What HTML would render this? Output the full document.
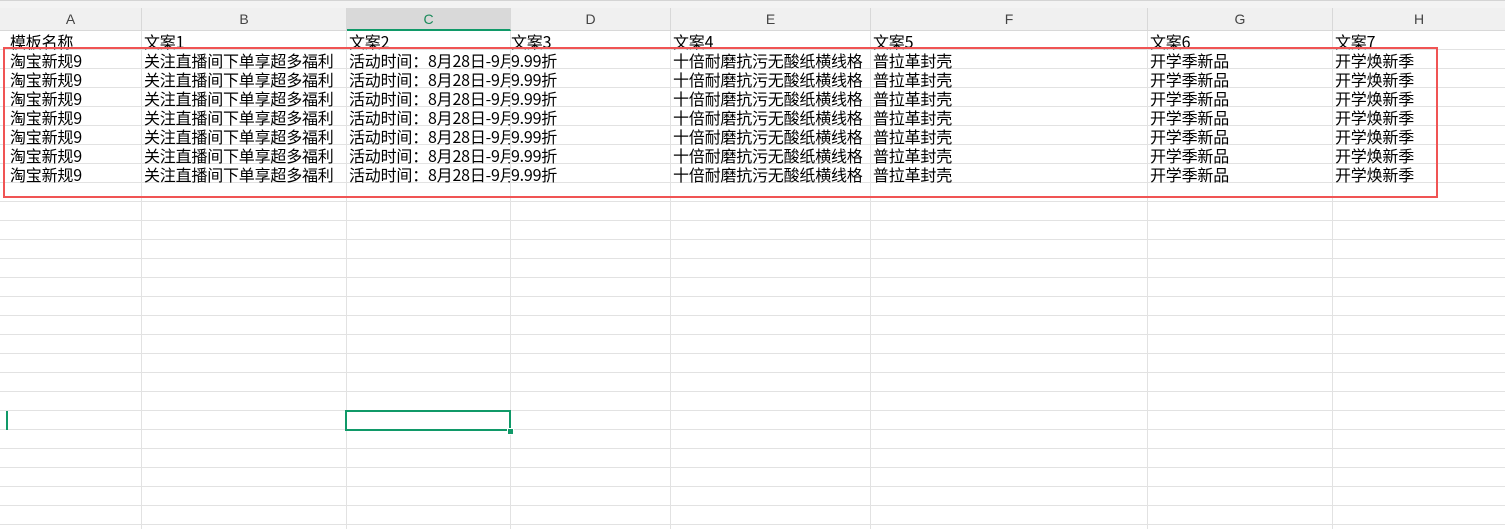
<!DOCTYPE html>
<html><head><meta charset="utf-8"><style>
body{margin:0;width:1505px;height:529px;overflow:hidden;background:#fff;position:relative;font-family:"Liberation Sans","Noto Sans CJK SC",sans-serif;}
.top{position:absolute;left:0;top:0;width:1505px;height:8px;background:#f3f3f3;border-top:1px solid #d4d4d4;box-sizing:border-box}
.hdr{position:absolute;left:0;top:8px;width:1505px;height:23px;background:#f0f0f0;border-bottom:1px solid #d8d8d8;box-sizing:border-box}
.h{position:absolute;top:8px;height:23px;line-height:23px;text-align:center;font-size:14px;color:#444;border-right:1px solid #d8d8d8;box-sizing:border-box}
.grid{position:absolute;left:0;top:31px;width:1505px;height:498px;background:repeating-linear-gradient(to bottom,transparent 0,transparent 18px,#e2e2e2 18px,#e2e2e2 19px)}
.v{position:absolute;top:31px;height:498px;width:1px;background:#e2e2e2}
.r{position:absolute;left:0;height:19px;width:1505px}
.c{position:absolute;top:1px;height:18px;line-height:18px;font-size:16px;color:#000;white-space:nowrap;overflow:hidden;font-family:"WenQuanYi Zen Hei","Noto Sans CJK SC",sans-serif;padding-left:3px;box-sizing:border-box;letter-spacing:-0.2px}
</style></head><body>
<div class="top"></div>
<div class="hdr"></div>
<div class="h" style="left:0;width:142px">A</div>
<div class="h" style="left:142px;width:205px">B</div>
<div class="h" style="left:347px;width:164px;background:#d9d9d9;color:#1a8a5a;border-bottom:2px solid #109968">C</div>
<div class="h" style="left:511px;width:160px">D</div>
<div class="h" style="left:671px;width:200px">E</div>
<div class="h" style="left:871px;width:277px">F</div>
<div class="h" style="left:1148px;width:185px">G</div>
<div class="h" style="left:1333px;width:172px;border-right:none">H</div>
<div class="grid"></div>
<div class="v" style="left:141px"></div><div class="v" style="left:346px"></div><div class="v" style="left:510px"></div><div class="v" style="left:670px"></div><div class="v" style="left:870px"></div><div class="v" style="left:1147px"></div><div class="v" style="left:1332px"></div>

<div class="r" style="top:31px"><div class="c" style="left:7px;width:134px">模板名称</div><div class="c" style="left:141px;width:205px">文案1</div><div class="c" style="left:346px;width:164px">文案2</div><div class="c" style="left:508px;width:162px">文案3</div><div class="c" style="left:670px;width:200px">文案4</div><div class="c" style="left:870px;width:277px">文案5</div><div class="c" style="left:1147px;width:185px">文案6</div><div class="c" style="left:1332px;width:173px">文案7</div></div>
<div class="r" style="top:50px"><div class="c" style="left:7px;width:134px">淘宝新规9</div><div class="c" style="left:141px;width:205px">关注直播间下单享超多福利</div><div class="c" style="left:346px;width:164px">活动时间：8月28日-9月</div><div class="c" style="left:508px;width:162px">9.99折</div><div class="c" style="left:670px;width:200px">十倍耐磨抗污无酸纸横线格</div><div class="c" style="left:870px;width:277px">普拉革封壳</div><div class="c" style="left:1147px;width:185px">开学季新品</div><div class="c" style="left:1332px;width:173px">开学焕新季</div></div>
<div class="r" style="top:69px"><div class="c" style="left:7px;width:134px">淘宝新规9</div><div class="c" style="left:141px;width:205px">关注直播间下单享超多福利</div><div class="c" style="left:346px;width:164px">活动时间：8月28日-9月</div><div class="c" style="left:508px;width:162px">9.99折</div><div class="c" style="left:670px;width:200px">十倍耐磨抗污无酸纸横线格</div><div class="c" style="left:870px;width:277px">普拉革封壳</div><div class="c" style="left:1147px;width:185px">开学季新品</div><div class="c" style="left:1332px;width:173px">开学焕新季</div></div>
<div class="r" style="top:88px"><div class="c" style="left:7px;width:134px">淘宝新规9</div><div class="c" style="left:141px;width:205px">关注直播间下单享超多福利</div><div class="c" style="left:346px;width:164px">活动时间：8月28日-9月</div><div class="c" style="left:508px;width:162px">9.99折</div><div class="c" style="left:670px;width:200px">十倍耐磨抗污无酸纸横线格</div><div class="c" style="left:870px;width:277px">普拉革封壳</div><div class="c" style="left:1147px;width:185px">开学季新品</div><div class="c" style="left:1332px;width:173px">开学焕新季</div></div>
<div class="r" style="top:107px"><div class="c" style="left:7px;width:134px">淘宝新规9</div><div class="c" style="left:141px;width:205px">关注直播间下单享超多福利</div><div class="c" style="left:346px;width:164px">活动时间：8月28日-9月</div><div class="c" style="left:508px;width:162px">9.99折</div><div class="c" style="left:670px;width:200px">十倍耐磨抗污无酸纸横线格</div><div class="c" style="left:870px;width:277px">普拉革封壳</div><div class="c" style="left:1147px;width:185px">开学季新品</div><div class="c" style="left:1332px;width:173px">开学焕新季</div></div>
<div class="r" style="top:126px"><div class="c" style="left:7px;width:134px">淘宝新规9</div><div class="c" style="left:141px;width:205px">关注直播间下单享超多福利</div><div class="c" style="left:346px;width:164px">活动时间：8月28日-9月</div><div class="c" style="left:508px;width:162px">9.99折</div><div class="c" style="left:670px;width:200px">十倍耐磨抗污无酸纸横线格</div><div class="c" style="left:870px;width:277px">普拉革封壳</div><div class="c" style="left:1147px;width:185px">开学季新品</div><div class="c" style="left:1332px;width:173px">开学焕新季</div></div>
<div class="r" style="top:145px"><div class="c" style="left:7px;width:134px">淘宝新规9</div><div class="c" style="left:141px;width:205px">关注直播间下单享超多福利</div><div class="c" style="left:346px;width:164px">活动时间：8月28日-9月</div><div class="c" style="left:508px;width:162px">9.99折</div><div class="c" style="left:670px;width:200px">十倍耐磨抗污无酸纸横线格</div><div class="c" style="left:870px;width:277px">普拉革封壳</div><div class="c" style="left:1147px;width:185px">开学季新品</div><div class="c" style="left:1332px;width:173px">开学焕新季</div></div>
<div class="r" style="top:164px"><div class="c" style="left:7px;width:134px">淘宝新规9</div><div class="c" style="left:141px;width:205px">关注直播间下单享超多福利</div><div class="c" style="left:346px;width:164px">活动时间：8月28日-9月</div><div class="c" style="left:508px;width:162px">9.99折</div><div class="c" style="left:670px;width:200px">十倍耐磨抗污无酸纸横线格</div><div class="c" style="left:870px;width:277px">普拉革封壳</div><div class="c" style="left:1147px;width:185px">开学季新品</div><div class="c" style="left:1332px;width:173px">开学焕新季</div></div>

<div style="position:absolute;left:3px;top:47px;width:1435px;height:151px;border:2px solid #f05454;box-sizing:border-box"></div>
<div style="position:absolute;left:345px;top:410px;width:166px;height:21px;border:2px solid #109968;box-sizing:border-box"></div>
<div style="position:absolute;left:507px;top:428px;width:5px;height:5px;background:#109968;border:1px solid #fff"></div>
<div style="position:absolute;left:6px;top:411px;width:2px;height:19px;background:#109968"></div>
</body></html>
